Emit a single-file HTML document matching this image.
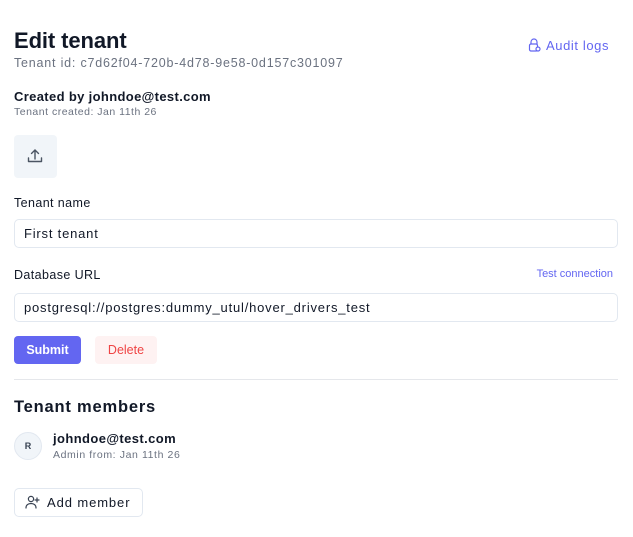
<!DOCTYPE html><html><head><style>
*{box-sizing:border-box;margin:0;padding:0}
body{width:633px;height:537px;background:#fff;font-family:"Liberation Sans",sans-serif;color:#111827;position:relative;overflow:hidden}
.a{position:absolute;white-space:nowrap}
.inp{position:absolute;left:14px;width:604px;height:29px;border:1px solid #e2e8f0;border-radius:5px;font-size:13px;padding:6px 9px;color:#111827;letter-spacing:0.8px}
</style></head><body>
<div class="a" style="left:14px;top:28px;font-size:22px;font-weight:bold;letter-spacing:-0.1px">Edit tenant</div>
<div class="a" style="left:14px;top:56px;font-size:12.5px;color:#6b7280;letter-spacing:0.8px">Tenant id: c7d62f04-720b-4d78-9e58-0d157c301097</div>
<div class="a" style="left:528px;top:38px;font-size:13px;color:#6366f1;letter-spacing:0.6px">
<svg width="13" height="14" viewBox="0 0 13 14" style="vertical-align:-2px;margin-right:5px" fill="none" stroke="#6366f1" stroke-width="1.2"><path d="M3 6V4a3 3 0 0 1 6 0v2"/><rect x="1.5" y="6" width="8" height="7" rx="1.5"/><circle cx="10" cy="11" r="2" fill="#fff"/></svg>Audit logs</div>
<div class="a" style="left:14px;top:89px;font-size:13px;font-weight:bold;letter-spacing:0.35px">Created by johndoe@test.com</div>
<div class="a" style="left:14px;top:106px;font-size:10.5px;color:#6b7280;letter-spacing:0.5px">Tenant created: Jan 11th 26</div>
<div class="a" style="left:14px;top:135px;width:43px;height:43px;background:#f1f5f9;border-radius:4px"></div>
<svg class="a" style="left:26px;top:147px" width="18" height="18" viewBox="0 0 18 18" fill="none" stroke="#4b5563" stroke-width="1.4" stroke-linecap="round" stroke-linejoin="round"><path d="M9 12V3M5.5 6.5L9 3l3.5 3.5M2.5 11v3.5h13V11"/></svg>
<div class="a" style="left:14px;top:196px;font-size:12.5px;letter-spacing:0.4px">Tenant name</div>
<div class="inp" style="top:219px">First tenant</div>
<div class="a" style="left:14px;top:268px;font-size:12.5px;letter-spacing:0.4px">Database URL</div>
<div class="a" style="right:20px;top:268px;font-size:11px;color:#6366f1">Test connection</div>
<div class="inp" style="top:293px">postgresql://postgres:dummy_utul/hover_drivers_test</div>
<div class="a" style="left:14px;top:336px;width:67px;height:28px;background:#6366f1;border-radius:4px;color:#fff;font-size:12.5px;font-weight:bold;text-align:center;line-height:28px">Submit</div>
<div class="a" style="left:95px;top:336px;width:62px;height:28px;background:#fef2f2;border-radius:4px;color:#ef4444;font-size:12.5px;text-align:center;line-height:28px">Delete</div>
<div class="a" style="left:14px;top:379px;width:604px;height:1px;background:#e5e7eb"></div>
<div class="a" style="left:14px;top:398px;font-size:16.5px;font-weight:bold;letter-spacing:0.8px">Tenant members</div>
<div class="a" style="left:14px;top:432px;width:28px;height:28px;border-radius:50%;background:#f1f5f9;border:1px solid #e2e8f0;font-size:9px;font-weight:bold;text-align:center;line-height:26px;color:#374151">R</div>
<div class="a" style="left:53px;top:431px;font-size:13px;font-weight:bold;letter-spacing:0.4px">johndoe@test.com</div>
<div class="a" style="left:53px;top:449px;font-size:10.5px;color:#6b7280;letter-spacing:0.6px">Admin from: Jan 11th 26</div>
<div class="a" style="left:14px;top:488px;width:129px;height:29px;border:1px solid #e2e8f0;border-radius:5px;font-size:13px;line-height:27px;padding-left:32px;letter-spacing:0.9px">Add member</div>
<svg class="a" style="left:25px;top:495px" width="15" height="14" viewBox="0 0 15 14" fill="none" stroke="#374151" stroke-width="1.2" stroke-linecap="round"><circle cx="6" cy="4" r="2.6"/><path d="M1 13c0-3 2.2-4.5 5-4.5s5 1.5 5 4.5M12 3v4M10 5h4"/></svg>
</body></html>
